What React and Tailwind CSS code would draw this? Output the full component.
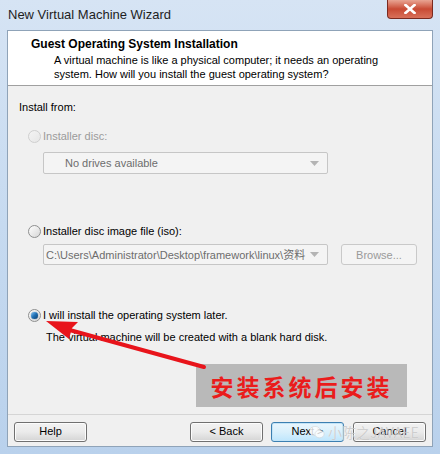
import React from 'react'

const FUENTE = { fontFamily: '"Liberation Sans", "Noto Sans CJK SC", sans-serif' }

// ── Radio estilo Windows 7 ──────────────────────────────────────────────────

function Radio({ marcado, deshabilitado }) {
  return (
    <span
      className={
        'relative inline-flex items-center justify-center w-[13px] h-[13px] rounded-full border shrink-0 ' +
        (deshabilitado
          ? 'border-[#cfcfcf] bg-gradient-to-br from-[#f4f4f4] to-[#e6e6e6]'
          : 'border-[#8e8f8f] bg-gradient-to-br from-[#ffffff] to-[#d6d6d6]')
      }
    >
      {marcado && (
        <span className="w-[7px] h-[7px] rounded-full bg-gradient-to-br from-[#7cc4f5] via-[#1f6fb3] to-[#0d3e6e] shadow-[0_0_1px_#0b3a66]" />
      )}
    </span>
  )
}

// ── Botón estilo Windows 7 ──────────────────────────────────────────────────

function Boton({ children, enfocado, deshabilitado, className = '' }) {
  let clases = 'h-[20px] rounded-[3px] border flex items-center justify-center text-[11px] '
  if (deshabilitado) clases += 'border-[#c9c9c9] bg-[#f4f4f4] text-[#9a9a9a] '
  else if (enfocado) clases += 'border-[#3c7fb1] bg-gradient-to-b from-[#eaf6fd] via-[#d9f0fc] to-[#bee6fd] text-black shadow-[inset_0_0_0_1px_#c3e4f7] '
  else clases += 'border-[#707070] bg-gradient-to-b from-[#f2f2f2] via-[#ebebeb] to-[#d4d4d4] text-black shadow-[inset_0_0_0_1px_#fcfcfc] '
  return <div className={clases + className}>{children}</div>
}

function Combo({ texto, deshabilitado, className = '' }) {
  return (
    <div className={'flex items-center border border-[#c6c6c6] bg-[#f4f4f4] rounded-[2px] ' + className}>
      <span className={'flex-1 truncate text-[11px] ' + (deshabilitado ? 'text-[#6d6d6d]' : 'text-black')}>{texto}</span>
      <svg width="9" height="5" viewBox="0 0 9 5" className="mr-[8px] shrink-0">
        <polygon points="0,0 9,0 4.5,5" fill="#b4b4b4" />
      </svg>
    </div>
  )
}

function Flecha() {
  return (
    <svg className="absolute left-0 top-0 pointer-events-none" width="440" height="454" viewBox="0 0 440 454">
      <line x1="204" y1="367" x2="66" y2="329" stroke="#e8141b" strokeWidth="4" strokeLinecap="round" />
      <polygon points="46,321 78,322 72,328 69,339" fill="#e8141b" />
    </svg>
  )
}

export default function App() {
  return (
    <div
      className="relative w-[440px] h-[454px] overflow-hidden bg-gradient-to-b from-[#d6e4f4] via-[#c6daf0] to-[#b9d1ec] text-black"
      style={FUENTE}
    >
      {/* Barra de título */}
      <div className="h-[30px] flex items-start justify-between pl-[8px] pr-[7px]">
        <span className="mt-[7px] text-[13px] text-[#1e1e1e] leading-[16px]">New Virtual Machine Wizard</span>
        <div className="w-[46px] h-[19px] rounded-b-[4px] border border-t-0 border-[#7a2a20] bg-gradient-to-b from-[#e8a493] via-[#c84a34] to-[#d8705a] flex items-center justify-center">
          <svg width="12" height="10" viewBox="0 0 12 10">
            <path d="M1.5 1 L10.5 9 M10.5 1 L1.5 9" stroke="#ffffff" strokeWidth="2.6" strokeLinecap="square" />
          </svg>
        </div>
      </div>

      {/* Área cliente */}
      <div className="mx-[7px] h-[417px] border border-[#8fa3b8] flex flex-col bg-[#f0f0f0]">

        {/* Encabezado blanco */}
        <div className="h-[55px] bg-white border-b border-[#a0a0a0] pl-[23px] pt-[6px]">
          <div className="text-[12px] font-bold leading-[14px]">Guest Operating System Installation</div>
          <div className="pl-[23px] mt-[2px] text-[11px] leading-[14px]">
            A virtual machine is like a physical computer; it needs an operating<br />
            system. How will you install the guest operating system?
          </div>
        </div>

        {/* Cuerpo */}
        <div className="flex-1 flex flex-col pl-[11px] pr-[15px] text-[11px] leading-[14px]">
          <div className="mt-[14px]">Install from:</div>

          <div className="mt-[15px] flex items-center gap-[2px] pl-[9px] text-[#9b9b9b]">
            <Radio deshabilitado />
            <span>Installer disc:</span>
          </div>
          <Combo texto="No drives available" deshabilitado className="mt-[9px] ml-[24px] w-[285px] h-[22px] pl-[21px]" />

          <div className="mt-[50px] flex items-center gap-[2px] pl-[9px]">
            <Radio />
            <span>Installer disc image file (iso):</span>
          </div>
          <div className="mt-[6px] ml-[24px] flex items-center gap-[13px]">
            <Combo
              texto="C:\Users\Administrator\Desktop\framework\linux\资料"
              deshabilitado
              className="w-[285px] h-[21px] pl-[2px]"
            />
            <Boton deshabilitado className="w-[76px] h-[21px]">Browse...</Boton>
          </div>

          <div className="mt-[43px] flex items-center gap-[2px] pl-[9px]">
            <Radio marcado />
            <span>I will install the operating system later.</span>
          </div>
          <div className="mt-[8px] pl-[27px]">The virtual machine will be created with a blank hard disk.</div>

          <div className="mt-[20px] ml-[177px] w-[211px] h-[43px] bg-[#b9b9b9] flex items-center justify-center">
            <span
              className="text-[23px] tracking-[3px] text-[#ea1c1c] font-semibold"
              style={{ fontFamily: '"Noto Sans CJK SC", sans-serif' }}
            >
              安装系统后安装
            </span>
          </div>
        </div>

        {/* Pie con botones */}
        <div className="h-[32px] border-t border-[#d5d5d5] flex items-center pl-[6px] pr-[6px] pt-[2px]">
          <Boton className="w-[73px]">Help</Boton>
          <div className="flex-1" />
          <Boton className="w-[73px]">&lt; Back</Boton>
          <Boton enfocado className="w-[73px] ml-[8px]">Next &gt;</Boton>
          <Boton className="w-[73px] ml-[9px]">Cancel</Boton>
        </div>
      </div>

      <Flecha />

      {/* Marca de agua */}
      <div className="absolute left-[309px] top-[424px] flex items-center gap-[3px] pointer-events-none opacity-80">
        <svg width="16" height="14" viewBox="0 0 16 14">
          <ellipse cx="6" cy="6" rx="5.5" ry="4.6" fill="#ffffff" stroke="#cfcfcf" strokeWidth="0.6" />
          <ellipse cx="10.5" cy="9" rx="4.6" ry="3.8" fill="#ffffff" stroke="#cfcfcf" strokeWidth="0.6" />
        </svg>
        <span
          className="text-[14px] text-[#c8c8c8] leading-[16px]"
          style={{ fontFamily: '"Noto Sans CJK SC", sans-serif', textShadow: '0 0 1px #fff' }}
        >
          小陈之JAVAEE
        </span>
      </div>
    </div>
  )
}
